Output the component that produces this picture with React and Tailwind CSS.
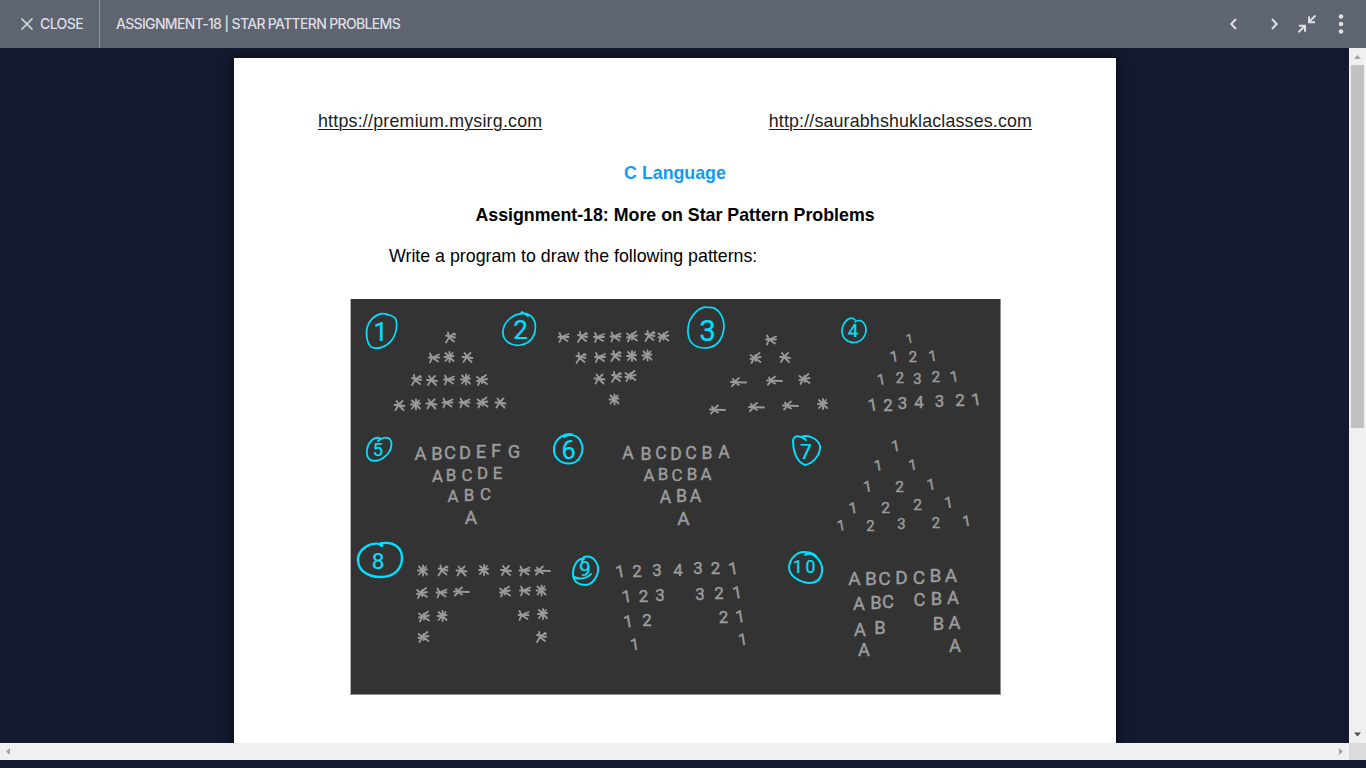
const STAR_SHAPES = [
  'M-5-3 5 4M-4 5-1-1 4-5M-5 1 5-1M0-3 0 3',
  'M-4-4-2 0-4 5M-2 0 5-3M-2 0 4 4M-5 0 5 0',
  'M-4-4 4 4M-4 4 3-4M0-5 0 5M-5 0 4-1',
  'M-2-5-1 0-4 5M-1 0 4-4 5-3M-1 0 4 4M-4-2 5 0',
  'M-5 0-1 0 3-4M-1 0-4 5M-1 0 5 1M-1 0 4 5M-3-4 0 0',
];
const LONG_STAR = 'M-4-3-2 1-5 4M-6 0 9 0.5M-3 0 2-4M-3 0 2 3';

const STARS = [
  [450, 337.5, 3], [434, 357.5, 1], [449.5, 357, 2], [467.5, 357, 4],
  [416, 380, 3], [432, 380, 4], [449, 379.5, 1], [466, 379.5, 2], [482, 380, 0],
  [399.5, 405, 4], [416, 404.5, 2], [431.5, 403.5, 4], [447.5, 402.5, 1], [464.5, 402.5, 1], [482.5, 402.5, 0], [500.5, 402.5, 4],
  [563.5, 337, 1], [582, 337, 3], [599, 337, 1], [615.5, 336.5, 1], [632, 336.5, 0], [649.5, 336, 3], [663.5, 336.5, 0],
  [580.5, 358, 3], [600, 357, 1], [615.5, 356, 3], [632, 356, 2], [647.5, 355.5, 2],
  [599.5, 378.5, 4], [616, 377, 3], [630.5, 376, 0], [614.5, 399.5, 2],
  [771, 339.5, 1], [755.5, 358, 0], [785, 357, 4], [737, 382, 5], [773, 380.5, 5], [804.5, 379, 0],
  [716, 409.5, 5], [755, 407, 5], [789, 405.5, 5], [823, 404, 2],
  [423, 570.5, 2], [442.5, 570.5, 3], [461.5, 570.5, 4], [484, 570, 2], [506, 570, 4], [524.5, 570.5, 1], [541, 570.5, 5],
  [422, 593, 0], [441.5, 592.5, 1], [460, 591.5, 5], [505, 591.5, 0], [525, 590.5, 1], [541.5, 590.5, 2],
  [424, 616.5, 0], [442.5, 616, 2], [523.5, 615, 1], [543, 614, 2], [423.5, 637, 0], [541, 637, 3],
];

// Each row: characters, cap height, then centre points.
const ROWS = [
  ['1', 9, [[909.5, 339]]],
  ['121', 10.5, [[894.5, 357], [913, 357], [933, 356.5]]],
  ['12321', 10.5, [[881.5, 380], [900, 378], [917.5, 379], [936, 377], [954.5, 377]]],
  ['1234321', 12, [[873, 405.5], [888, 405], [902.5, 403], [919, 402], [939.5, 401], [960, 399.5], [976.5, 400]]],
  ['ABCDEFG', 13, [[420.5, 453.5], [437, 453], [450, 452.5], [465, 452.5], [481, 451], [496, 450], [514, 451.5]]],
  ['ABCDE', 12, [[437.5, 475.5], [451, 475], [467, 475], [482.5, 473], [497.5, 473]]],
  ['ABC', 12, [[453, 496], [469, 495], [485.5, 494]]],
  ['A', 13.5, [[471, 517.5]]],
  ['ABCDCBA', 12.5, [[628, 453], [646, 454], [661, 453], [676, 453.5], [691, 453], [707, 453], [724, 452]]],
  ['ABCBA', 12, [[649, 475], [663, 474], [677, 475], [692, 474], [706, 473.5]]],
  ['ABA', 12.5, [[665.5, 497], [681.5, 496], [695.5, 496]]],
  ['A', 13.5, [[683.5, 518.5]]],
  ['1', 11, [[896, 446.5]]],
  ['11', 10.5, [[878.5, 466], [913, 465.5]]],
  ['121', 11, [[868, 487], [899.5, 486.5], [931.5, 485]]],
  ['1221', 11, [[853.5, 508.5], [885.5, 507.5], [917.5, 504.5], [949, 503]]],
  ['12321', 10.5, [[841.5, 526], [870.5, 525.5], [901.5, 524], [936, 523], [967, 521.5]]],
  ['1234321', 12, [[620.5, 572], [637, 571], [657, 570], [678, 570], [698, 568], [715.5, 568], [733.5, 569]]],
  ['123321', 12, [[627, 597], [643.5, 595.5], [660, 594.5], [700, 593.5], [719, 593], [737.5, 593]]],
  ['1221', 12, [[628.5, 622], [647, 620], [723.5, 617], [740.5, 617]]],
  ['11', 11.5, [[635, 645], [743, 640]]],
  ['ABCDCBA', 13.5, [[854.5, 578.5], [871, 578], [884.5, 578.5], [901.5, 577], [919, 577], [935.5, 575], [951, 575]]],
  ['ABCCBA', 13, [[859, 603.5], [876, 602], [888, 601.5], [919.5, 599], [936.5, 598], [953, 597.5]]],
  ['ABBA', 13, [[860, 629], [880, 627.5], [938.5, 623.5], [954.5, 622]]],
  ['AA', 13, [[864, 649.5], [955, 645]]],
];

const LABELS = [
  ['1', 18, [[380, 332]]], ['2', 18.5, [[520.5, 330]]], ['3', 21, [[707.5, 330.5]]],
  ['4', 13.5, [[853, 330.5]]], ['5', 13, [[378, 449]]], ['6', 18, [[568.5, 449.5]]],
  ['7', 15, [[806, 451]]], ['8', 16, [[378, 560.5]]], ['9', 15, [[585, 568.5]]],
  ['10', 12.5, [[797, 567], [810.5, 567]]],
];

const RINGS = [
  ['M388 315C382 311 373 316 369 323C365 330 366 342 371 347C378 350 386 347 391 341C397 334 398 323 395 318C392 315 388 315 386 314', 1.7],
  ['M526 314C516 312 504 320 503 331C502 341 512 347 521 345C532 343 537 333 535 323C533 315 526 312 520 314L522 312 528 316', 1.7],
  ['M709 307.5C700 305 689 316 688 328C687 342 694 348 705 348C716 348 723 340 724 327C724 315 717 307 709 307.5', 1.7],
  ['M855 320C852 315 844 320 842 329C841 338 848 343 855 342.5C864 341 868 332 865 325C862 319 857 320 855 322', 1.6],
  ['M381 439C375 435 368 442 367 450C366 459 371 462 378 460.5C388 457 393 448 391 441C389 436 382 437 378 441', 1.8],
  ['M573 435C566 432 555 438 554 448C553 459 562 464 570 463.5C580 463 585 451 581 442C578 435 570 433 564 437', 2],
  ['M806 440C801 436 795 434 793 440C793 450 796 462 805 465C812 464 821 455 820 446C818 439 809 434 801 437', 1.9],
  ['M382 545C373 541 360 547 358 558C357 570 367 577 381 577C394 577 402 569 402 558C402 547 393 542 384 543C380 543 378 544 382 546', 2.4],
  ['M584 559C578 557 573 566 573 574C573 582 579 585 586 585C594 584 599 574 598 567C596 559 591 555 584 557L582 561M574 577C580 580 588 578 591 574', 2],
  ['M805 555C811 551 820 558 822 567C823 577 818 583 809 583C799 582 789 576 789 567C790 558 797 552 804 552C811 552 816 554 818 559', 2],
];

function Writing({ rows, tilt }) {
  return rows.map(([chars, height, points], i) => (
    <text key={i} textAnchor="middle" fontSize={height / 0.711}>
      {[...chars].map((ch, j) => (
        <tspan key={j} x={points[j][0] + (ch === '1' ? 0.7 : 0)} y={points[j][1] + height / 2} rotate={ch === '1' ? tilt : 0}>{ch}</tspan>
      ))}
    </text>
  ));
}

function PatternBoard() {
  return (
    <svg className="block h-[396px] w-[651px]" viewBox="350 299 651 396" fontFamily="Roboto, sans-serif">
      <rect x="350" y="299" width="651" height="396" fill="#8d8d8d" />
      <rect x="350" y="299" width="1" height="395" fill="#b8b8b8" />
      <rect x="351" y="299" width="649" height="395" fill="#333333" />
      <g fill="none" stroke="#999999" strokeWidth="1.85" strokeLinecap="round" strokeLinejoin="round">
        {STARS.map(([x, y, shape], i) => (
          <path key={i} d={STAR_SHAPES[shape] ?? LONG_STAR} transform={`translate(${x} ${y})`} />
        ))}
      </g>
      <g fill="#9c9c9c" stroke="#9c9c9c" strokeWidth="0.45" strokeLinejoin="round"><Writing rows={ROWS} tilt={-10} /></g>
      <g fill="none" stroke="#00e1ff" strokeLinecap="round" strokeLinejoin="round">
        {RINGS.map(([d, w], i) => <path key={i} d={d} strokeWidth={w} />)}
      </g>
      <g fill="#00e1ff" stroke="#00e1ff" strokeWidth="0.2"><Writing rows={LABELS} tilt={0} /></g>
    </svg>
  );
}

function Toolbar() {
  return (
    <header className="flex h-12 shrink-0 items-center bg-[#5f6471] font-['Inter',sans-serif] text-sm font-medium text-[#dedfe2]">
      <div className="flex h-full w-[100px] items-center border-r border-[#9497a0] pl-5">
        <svg className="h-[14px] w-[14px]" viewBox="0 0 14 14" fill="none" stroke="currentColor" strokeWidth="1.5"><path d="M1.5 1.5 12.5 12.5M12.5 1.5 1.5 12.5" /></svg>
        <span className="ml-[6px] tracking-[-0.6px]">CLOSE</span>
      </div>
      <span className="ml-4 whitespace-nowrap tracking-[-0.67px]">ASSIGNMENT-18 | STAR PATTERN PROBLEMS</span>
      <svg className="ml-auto h-12 w-[146px]" viewBox="1220 0 146 48" fill="none" stroke="currentColor" strokeWidth="2">
        <path d="M1236 19 1231.3 24 1236 29M1272 19 1276.7 24 1272 29" />
        <path d="M1315.5 15.5 1309.5 21.5M1309 16.5V22.3H1315M1298.5 32.3 1304.5 26.3M1299 25.7H1305V31.7" />
        <g fill="currentColor" stroke="none"><circle cx="1341" cy="16.5" r="2.3" /><circle cx="1341" cy="24" r="2.3" /><circle cx="1341" cy="31.5" r="2.3" /></g>
      </svg>
    </header>
  );
}

function DocumentPage() {
  return (
    <article className="flex h-[760px] w-[882px] shrink-0 flex-col bg-white font-['Liberation_Sans',sans-serif] text-[17.8px] leading-[22px] text-black shadow-[0_0_10px_rgba(0,0,0,0.7)]">
      <div className="mt-[52px] flex justify-between pr-[84px] pl-[84px] text-[#1c1c1c]">
        <span className="tracking-[0.23px] underline decoration-1 underline-offset-2">https://premium.mysirg.com</span>
        <span className="tracking-[0.17px] underline decoration-1 underline-offset-2">http://saurabhshuklaclasses.com</span>
      </div>
      <h1 className="mt-[30px] text-center font-bold text-[#0c9cf9]">C Language</h1>
      <h2 className="mt-5 text-center font-bold">Assignment-18: More on Star Pattern Problems</h2>
      <p className="mt-[19px] pl-[155px]">Write a program to draw the following patterns:</p>
      <div className="mt-8 pl-[116px]"><PatternBoard /></div>
    </article>
  );
}

function Arrow({ d, className }) {
  return <svg className="h-[17px] w-[17px] shrink-0" viewBox="0 0 17 17"><path className={className} d={d} /></svg>;
}

export default function App() {
  return (
    <div className="flex h-[768px] w-[1366px] flex-col overflow-hidden bg-[#14192e]">
      <Toolbar />
      <div className="flex h-[695px]">
        <main className="flex w-[1349px] justify-center overflow-hidden pt-[10px] pr-px pl-[2px]">
          <DocumentPage />
        </main>
        <div className="flex w-[17px] flex-col items-center justify-between bg-[#f0f0f0]">
          <Arrow className="fill-[#a3a3a3]" d="M5 11 8.5 7 12 11Z" />
          <div className="mb-auto h-[363px] w-[13px] bg-[#c1c1c1]" />
          <Arrow className="fill-[#505050]" d="M5 6.5H12L8.5 10.5Z" />
        </div>
      </div>
      <div className="flex h-[17px] bg-[#f0f0f0]">
        <div className="flex w-[1349px] justify-between">
          <Arrow className="fill-[#a3a3a3]" d="M10 5V12L6 8.5Z" />
          <Arrow className="fill-[#a3a3a3]" d="M7 5V12L11 8.5Z" />
        </div>
        <div className="w-[17px] bg-[#dcdcdc]" />
      </div>
    </div>
  );
}
